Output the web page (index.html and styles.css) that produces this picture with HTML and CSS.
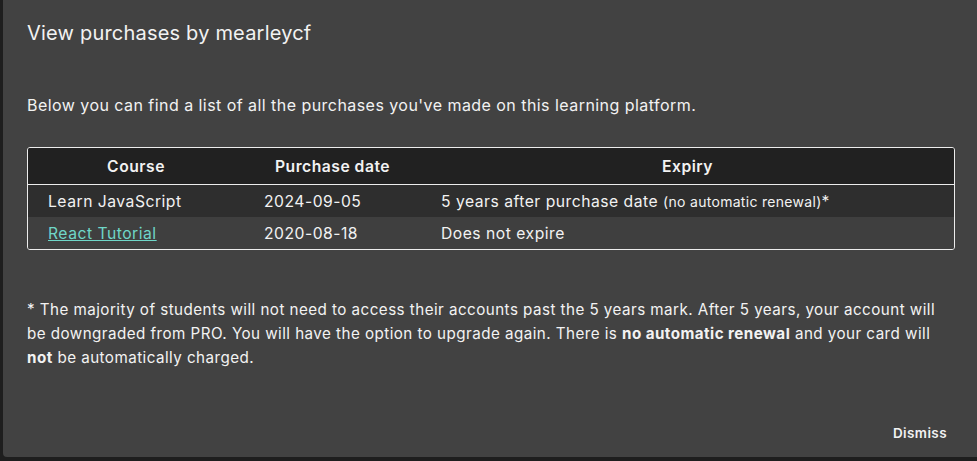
FILE: index.html
```html
<!DOCTYPE html>
<html>
<head>
<meta charset="utf-8">
<link rel="stylesheet" href="styles.css">
</head>
<body>
<div class="modal">
  <h2 class="title">View purchases by mearleycf</h2>
  <p class="intro">Below you can find a list of all the purchases you've made on this learning platform.</p>
  <div class="table-wrap">
    <table class="purchases">
      <thead>
        <tr><th class="c1">Course</th><th class="c2">Purchase date</th><th class="c3">Expiry</th></tr>
      </thead>
      <tbody>
        <tr class="odd"><td>Learn JavaScript</td><td>2024-09-05</td><td>5 years after purchase date <span class="small">(no automatic renewal)</span>*</td></tr>
        <tr class="even"><td><a href="#" class="link">React Tutorial</a></td><td>2020-08-18</td><td>Does not expire</td></tr>
      </tbody>
    </table>
  </div>
  <p class="note">* The majority of students will not need to access their accounts past the 5 years mark. After 5 years, your account will be downgraded from PRO. You will have the option to upgrade again. There is <b>no automatic renewal</b> and your card will <b>not</b> be automatically charged.</p>
  <div class="actions"><button class="dismiss">Dismiss</button></div>
</div>
</body>
</html>
```
FILE: styles.css
```css
html, body {
  margin: 0;
  padding: 0;
  height: 100%;
  overflow: hidden;
  background: #1e1e1e;
  font-family: Inter, "Noto Sans", sans-serif;
  color: #f2f2f2;
}
.modal {
  margin-left: 3px;
  width: 1000px;
  height: 457px;
  box-sizing: border-box;
  background: #424242;
  border-radius: 0 0 4px 4px;
  padding: 20px 24px 0 24px;
  display: flex;
  flex-direction: column;
}
.title {
  margin: 0;
  font-size: 20px;
  font-weight: 400;
  line-height: 26px;
  letter-spacing: 0.2px;
}
.intro {
  margin: 48px 0 0 0;
  font-size: 16px;
  line-height: 22px;
  letter-spacing: 0.45px;
}
.table-wrap {
  margin-top: 31px;
  width: 926px;
  border: 1px solid #ececec;
  border-radius: 3px;
  overflow: hidden;
}
.purchases {
  width: 100%;
  border-collapse: collapse;
  font-size: 15.7px;
  letter-spacing: 0.5px;
}
.purchases th {
  background: #212121;
  font-weight: 600;
  height: 36px;
  padding: 0;
  text-align: center;
  border-bottom: 1px solid #ececec;
}
.c1 { width: 216px; }
.c2 { width: 177px; }
.purchases td {
  padding: 0 20px;
  height: 32px;
  text-align: left;
}
.odd td { background: #2e2e2e; }
.even td { background: #3f3f3f; height: 31px; padding-top: 1px; }
.small { font-size: 14px; letter-spacing: 0.3px; }
.link { color: #6fd6c8; text-decoration: underline; }
.note {
  margin: 48px 0 0 0;
  font-size: 15.2px;
  line-height: 24px;
  letter-spacing: 0.45px;
  width: 930px;
}
.note b { font-weight: 700; }
.actions {
  margin-top: auto;
  width: 924px;
  display: flex;
  justify-content: flex-end;
  padding-bottom: 10px;
}
.dismiss {
  background: none;
  border: none;
  color: #f2f2f2;
  font-family: inherit;
  font-size: 13.5px;
  font-weight: 600;
  letter-spacing: 0.4px;
  padding: 6px 4px;
}
```
